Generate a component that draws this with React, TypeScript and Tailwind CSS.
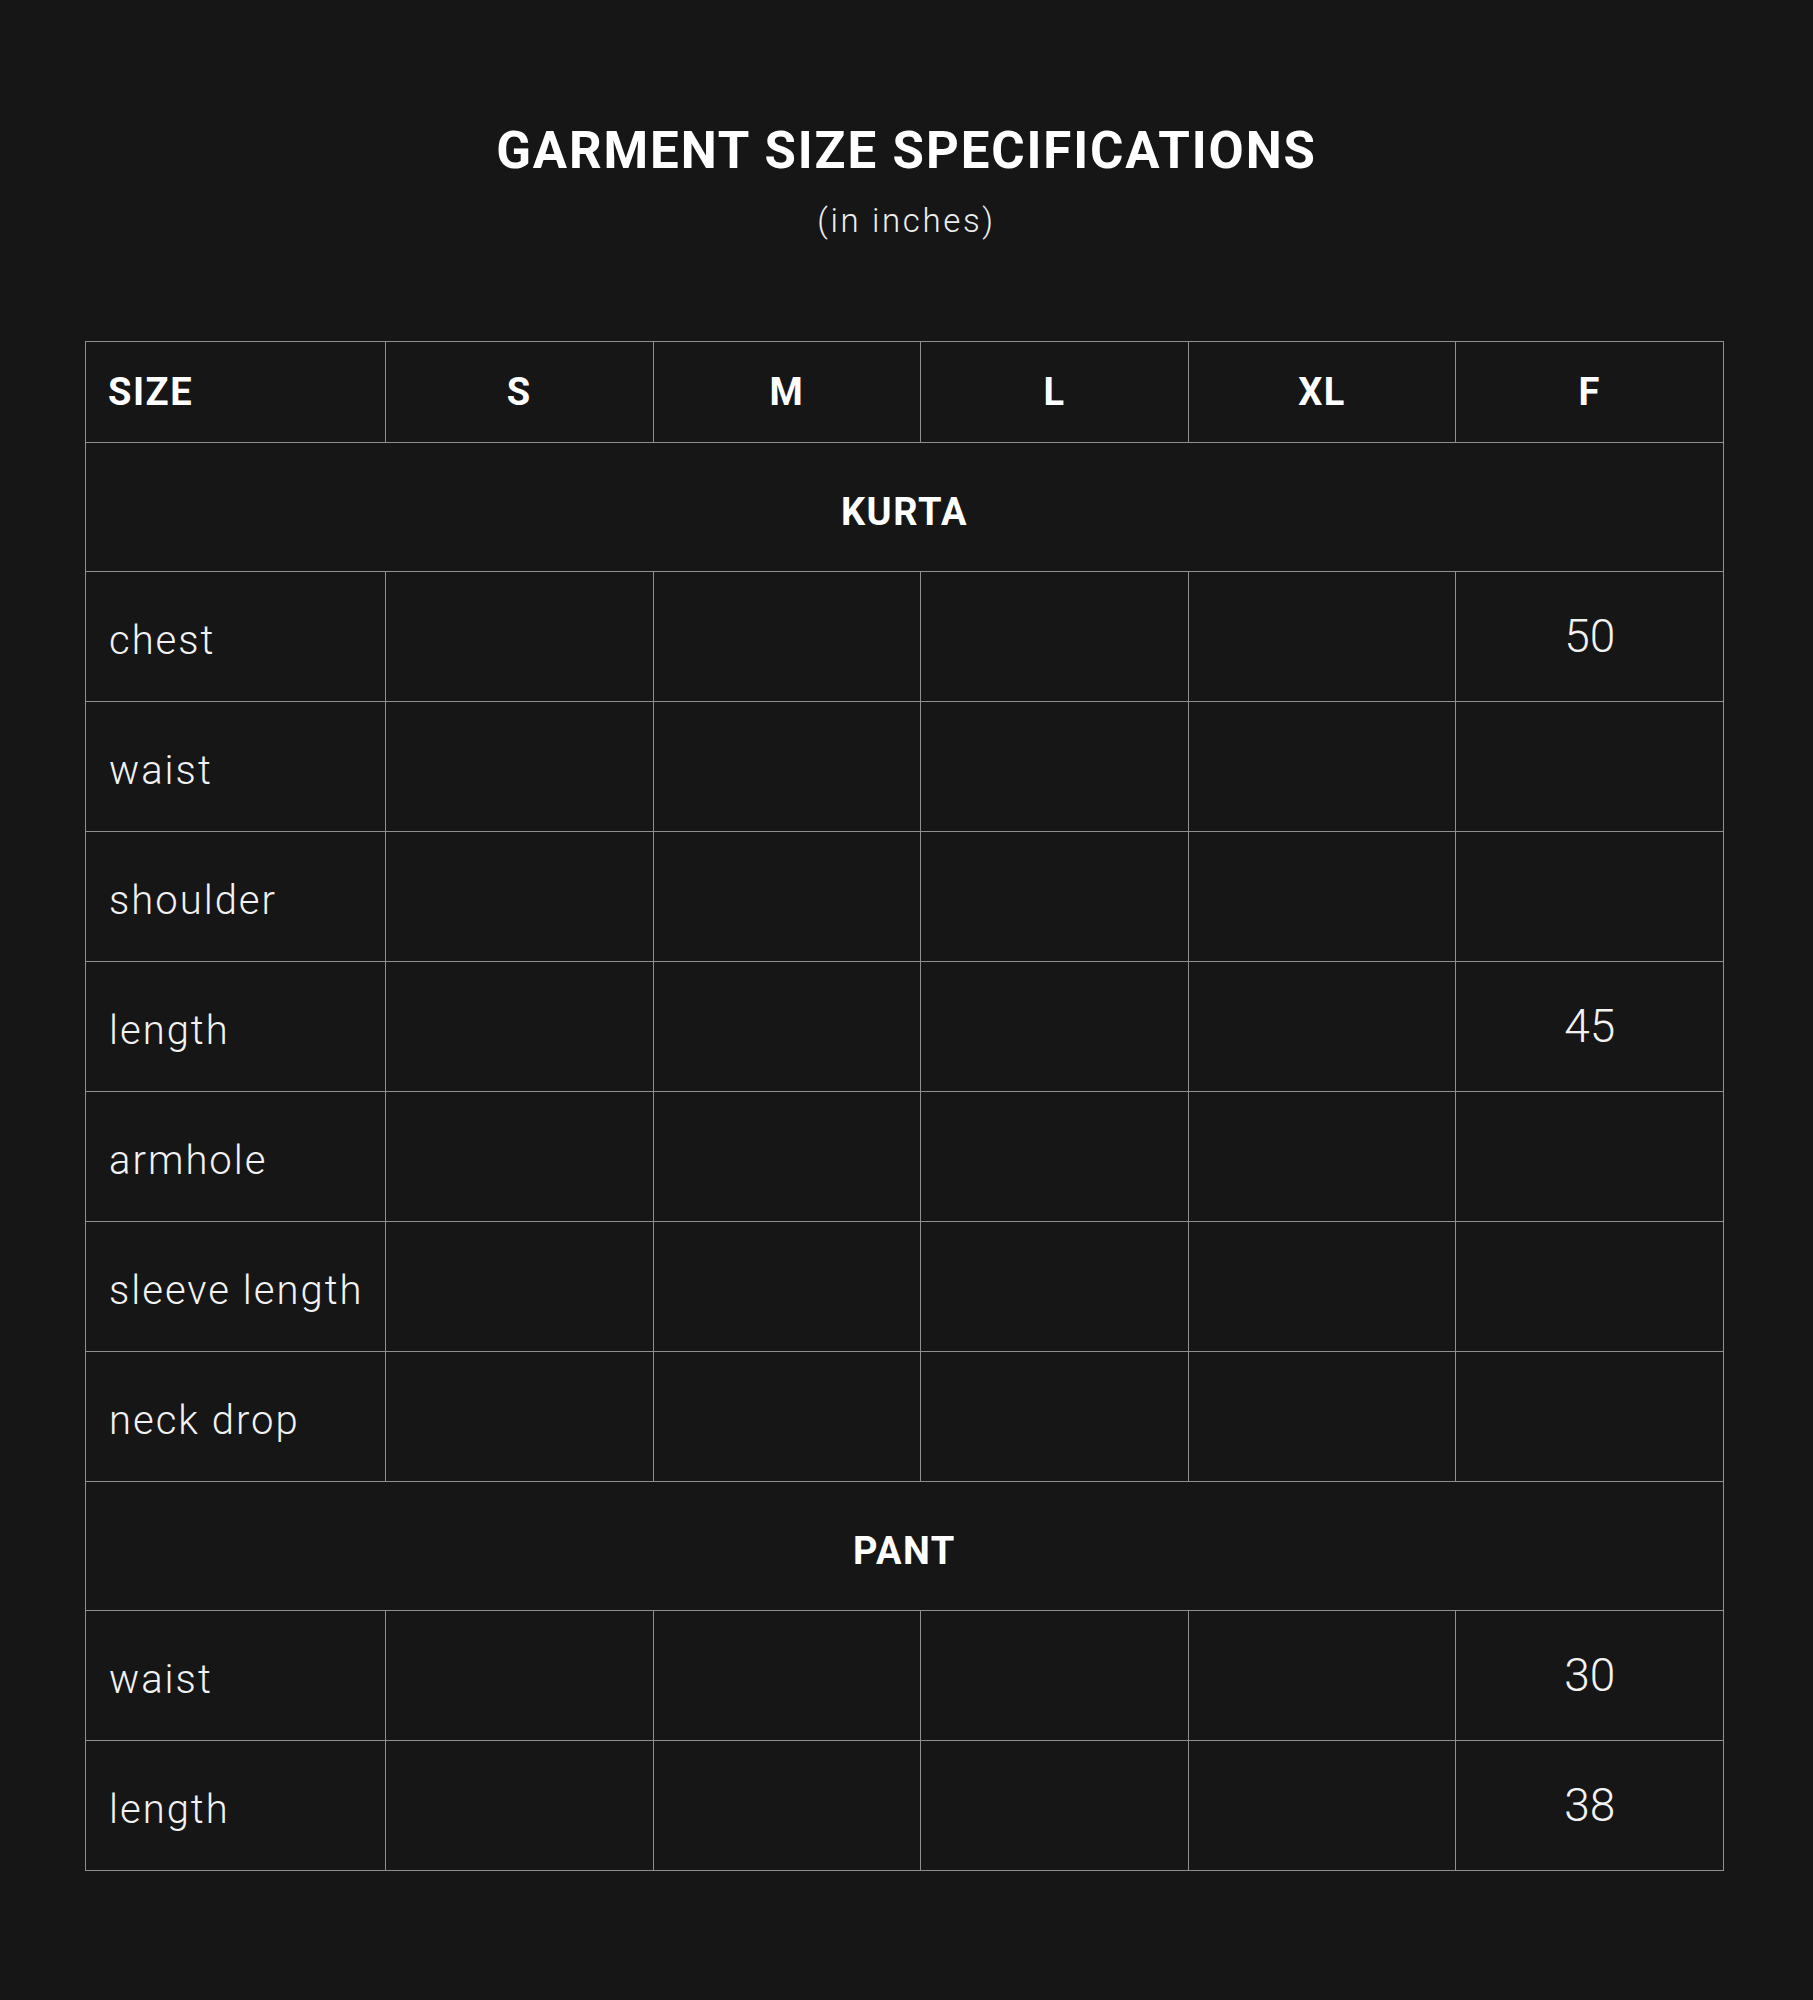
const sizes = ["S", "M", "L", "XL", "F"];

type Row = { label: string; f?: string };

const kurta: Row[] = [
  { label: "chest", f: "50" },
  { label: "waist" },
  { label: "shoulder" },
  { label: "length", f: "45" },
  { label: "armhole" },
  { label: "sleeve length" },
  { label: "neck drop" },
];

const pant: Row[] = [
  { label: "waist", f: "30" },
  { label: "length", f: "38" },
];

function Section({ title, rows }: { title: string; rows: Row[] }) {
  return (
    <>
      <tr className="h-[129px]">
        <td
          colSpan={6}
          className="border border-[#8f8f8f] pt-[10px] text-center text-[38px] font-bold tracking-[0.04em] text-white"
        >
          {title}
        </td>
      </tr>
      {rows.map((r, i) => (
        <tr key={title + i} className="h-[130px]">
          <td className="border border-[#8f8f8f] pt-[8px] pl-[23px] text-left text-[40px] font-light tracking-[0.05em] text-[#f2f2f2]">
            {r.label}
          </td>
          {sizes.map((s) => (
            <td
              key={s}
              className="border border-[#8f8f8f] text-center text-[46px] font-light text-[#f2f2f2]"
            >
              {s === "F" ? r.f : ""}
            </td>
          ))}
        </tr>
      ))}
    </>
  );
}

export default function App() {
  return (
    <div
      className="min-h-[2000px] w-full bg-[#161616] text-white"
      style={{ fontFamily: "Roboto, 'Liberation Sans', sans-serif" }}
    >
      <div className="flex flex-col items-center pt-[125px]">
        <h1 className="text-[51px] leading-none font-bold tracking-[0.037em]">
          GARMENT SIZE SPECIFICATIONS
        </h1>
        <p className="mt-[28px] text-[33px] leading-none font-light tracking-[0.08em] text-[#eeeeee]">
          (in inches)
        </p>
      </div>
      <table className="mt-[104px] ml-[85px] w-[1639px] table-fixed border-collapse">
        <colgroup>
          <col className="w-[300px]" />
          <col />
          <col />
          <col />
          <col />
          <col />
        </colgroup>
        <thead>
          <tr className="h-[101px]">
            <th className="border border-[#8f8f8f] pl-[22px] text-left text-[38px] font-bold tracking-[0.04em]">
              SIZE
            </th>
            {sizes.map((s) => (
              <th
                key={s}
                className="border border-[#8f8f8f] text-center text-[38px] font-bold tracking-[0.04em]"
              >
                {s}
              </th>
            ))}
          </tr>
        </thead>
        <tbody>
          <Section title="KURTA" rows={kurta} />
          <Section title="PANT" rows={pant} />
        </tbody>
      </table>
    </div>
  );
}
